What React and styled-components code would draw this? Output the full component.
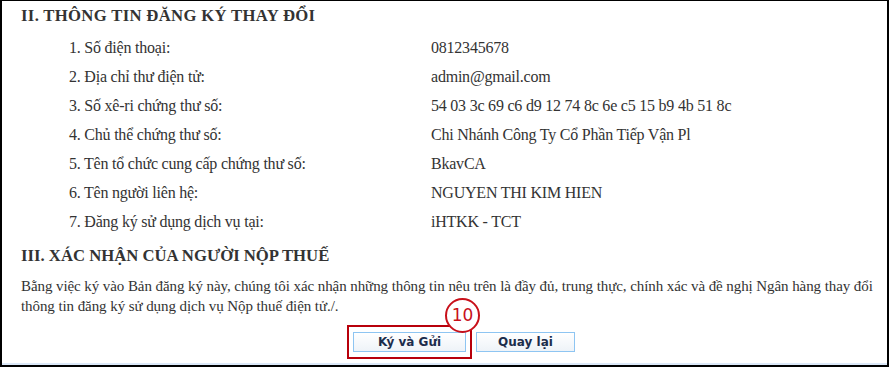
import React from "react";
import styled, { createGlobalStyle } from "styled-components";

const GlobalStyle = createGlobalStyle`
    html, body {
        margin: 0;
        padding: 0;
        background: #fff;
    }
`;

const Frame = styled.div`
    width: 889px;
    height: 367px;
    box-sizing: border-box;
    border-style: solid;
    border-color: #000;
    border-width: 1px 2px 2px 2px;
    box-shadow: inset 0 -2px 0 #dbe8f8;
    background: #fff;
    padding: 5px 0 0 19px;
    font-family: "Liberation Serif", "Times New Roman", serif;
    color: #333;
    font-size: 16px;
    overflow: hidden;
`;

const Heading = styled.h2`
    margin: 0;
    font-size: 16.7px;
    font-weight: bold;
    line-height: 20px;
    letter-spacing: ${({ $wide }) => ($wide ? "0.32px" : "0")};
    color: #333;
`;

const InfoList = styled.div`
    display: flex;
    flex-direction: column;
    padding: 12px 0 0 48px;
    margin-bottom: 5px;
`;

const InfoRow = styled.div`
    display: grid;
    grid-template-columns: 362px 1fr;
    height: 29px;
    line-height: 20px;
    letter-spacing: -0.22px;
`;

const Label = styled.span``;

const Value = styled.span``;

const Paragraph = styled.p`
    margin: 10px 0 0;
    font-size: 15px;
    letter-spacing: -0.08px;
    line-height: 20px;
    padding-right: 8px;
`;

const Actions = styled.div`
    display: flex;
    gap: 10px;
    padding: 16px 0 0 332px;
`;

const Marked = styled.div`
    position: relative;
    padding: 5px 4px;
    margin: -7px -6px 0;
    border: 2px solid #b8000b;
`;

const Step = styled.span`
    position: absolute;
    top: -29px;
    right: -10px;
    width: 31px;
    height: 31px;
    border: 2px solid #c8101a;
    border-radius: 50%;
    background: #fff;
    color: #c8101a;
    display: flex;
    align-items: center;
    justify-content: center;
    font-family: "DejaVu Sans", Verdana, sans-serif;
    font-size: 17px;
    line-height: 1;
`;

const Button = styled.button`
    height: 20px;
    width: ${({ $w }) => $w}px;
    box-sizing: border-box;
    border: 1px solid #8ec5f2;
    background: linear-gradient(#ffffff, #eef3f8);
    color: #1c2d4c;
    font-family: "DejaVu Sans", Verdana, sans-serif;
    font-weight: bold;
    font-size: 12px;
    padding: 0;
    cursor: pointer;
`;

const rows = [
    ["1. Số điện thoại:", "0812345678"],
    ["2. Địa chỉ thư điện tử:", "admin@gmail.com"],
    ["3. Số xê-ri chứng thư số:", "54 03 3c 69 c6 d9 12 74 8c 6e c5 15 b9 4b 51 8c"],
    ["4. Chủ thể chứng thư số:", "Chi Nhánh Công Ty Cổ Phần Tiếp Vận Pl"],
    ["5. Tên tổ chức cung cấp chứng thư số:", "BkavCA"],
    ["6. Tên người liên hệ:", "NGUYEN THI KIM HIEN"],
    ["7. Đăng ký sử dụng dịch vụ tại:", "iHTKK - TCT"],
];

const App = () => {
    return (
        <>
            <GlobalStyle />
            <Frame>
                <Heading $wide>II. THÔNG TIN ĐĂNG KÝ THAY ĐỔI</Heading>
                <InfoList>
                    {rows.map(([label, value]) => (
                        <InfoRow key={label}>
                            <Label>{label}</Label>
                            <Value>{value}</Value>
                        </InfoRow>
                    ))}
                </InfoList>
                <Heading>III. XÁC NHẬN CỦA NGƯỜI NỘP THUẾ</Heading>
                <Paragraph>
                    Bằng việc ký vào Bản đăng ký này, chúng tôi xác nhận những
                    thông tin nêu trên là đầy đủ, trung thực, chính xác và đề
                    nghị Ngân hàng thay đổi thông tin đăng ký sử dụng dịch vụ
                    Nộp thuế điện tử./.
                </Paragraph>
                <Actions>
                    <Marked>
                        <Step>10</Step>
                        <Button $w={113}>Ký và Gửi</Button>
                    </Marked>
                    <Button $w={99}>Quay lại</Button>
                </Actions>
            </Frame>
        </>
    );
};

export default App;
